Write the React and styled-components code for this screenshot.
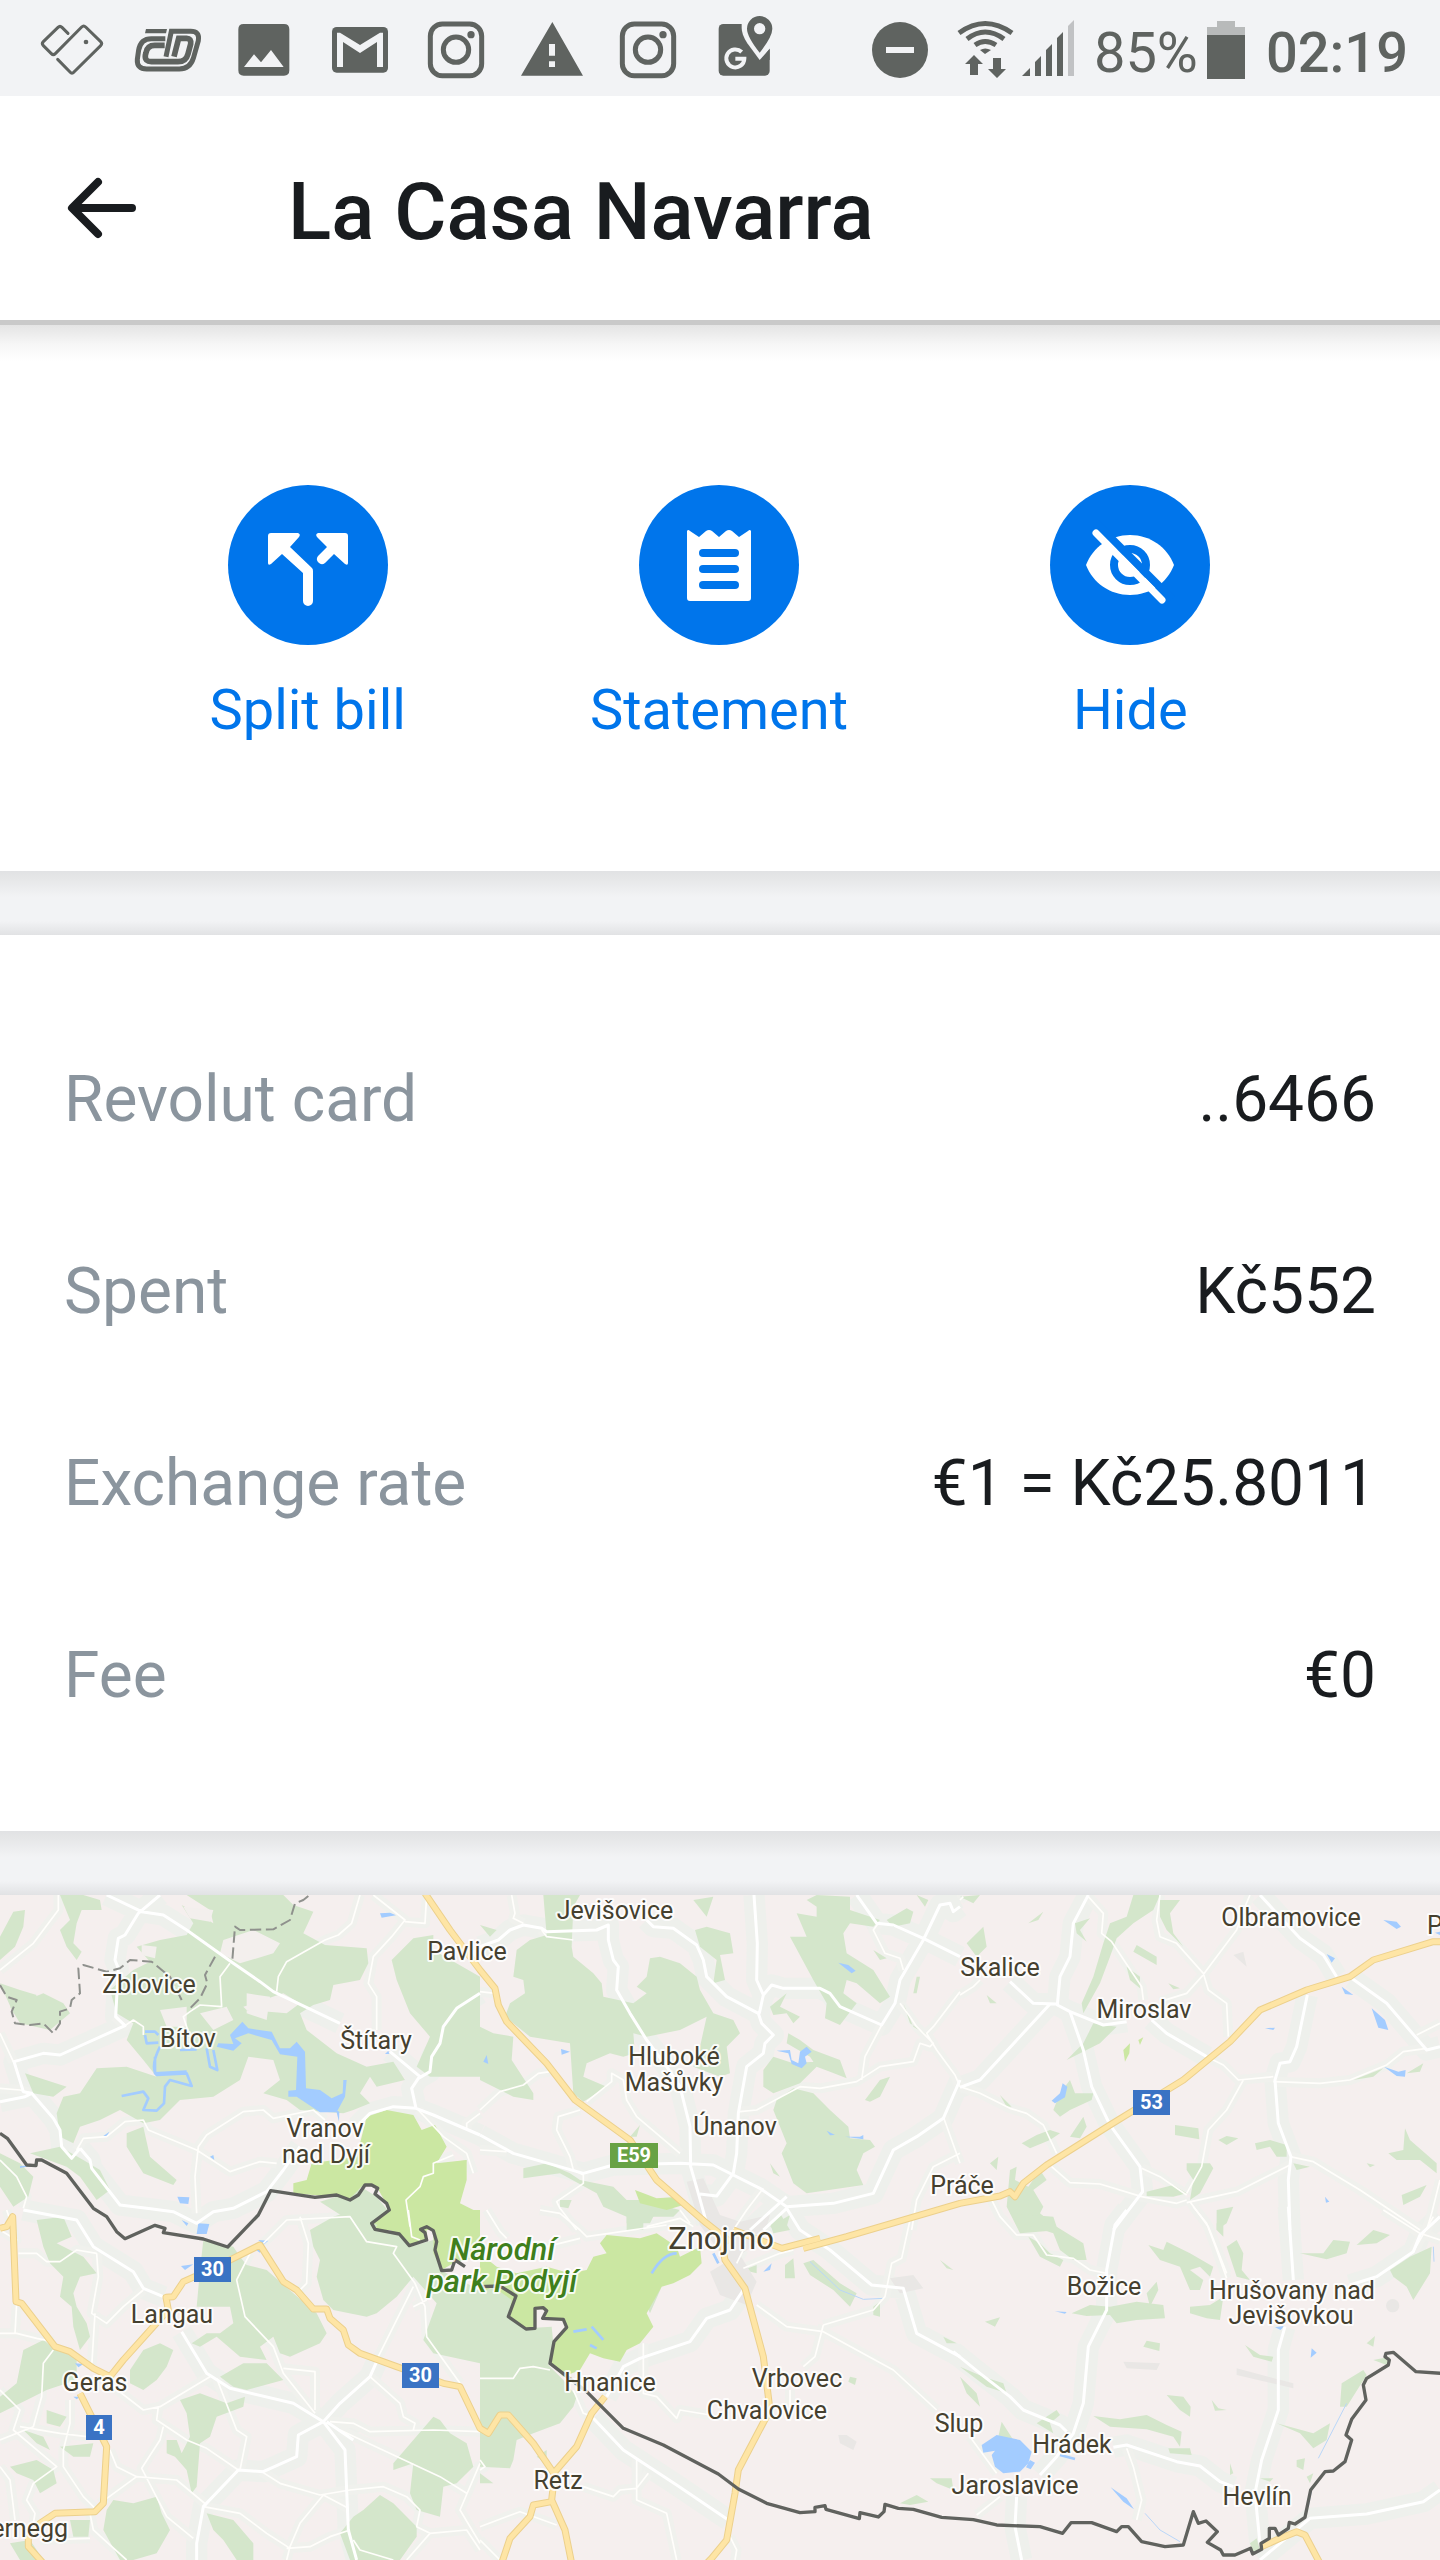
import React from "react";
import styled, { createGlobalStyle } from "styled-components";

const GlobalStyle = createGlobalStyle`
  * {
    box-sizing: border-box;
  }
  body {
    margin: 0;
    background-color: #f2f3f5;
    font-family: Roboto, "Noto Sans", sans-serif;
    color: #191c1f;
  }
`;

const Page = styled.div`
  width: 100%;
  overflow: hidden;
`;

const StatusBar = styled.div`
  display: flex;
  justify-content: space-between;
  height: 96px;
  padding: 0 32px 0 24px;
  background-color: #f2f3f5;
  color: #5f6360;
  font-size: 56px;
  line-height: 106px;
`;

const StatusGroup = styled.div`
  display: flex;
  align-items: flex-start;
`;

const StatusIcon = styled.svg`
  display: block;
  flex: none;
  width: ${(props) => props.$width || 96}px;
  height: 96px;
  fill: #5f6360;
`;

const Battery = styled.span`
  width: 102px;
`;

const Clock = styled.span`
  font-weight: 500;
  margin-left: 20px;
`;

const Header = styled.header`
  display: flex;
  align-items: center;
  height: 229px;
  padding: 0 64px;
  background-color: #fff;
  border-bottom: 5px solid #c9c9c9;
`;

const BackButton = styled.button`
  display: flex;
  padding: 0;
  margin-right: 144px;
  border: none;
  background: none;
`;

const Title = styled.h1`
  margin: 0;
  padding-top: 8px;
  font-size: 80px;
  font-weight: 500;
`;

const Actions = styled.section`
  display: flex;
  padding: 160px 104px 128px 102px;
  background: linear-gradient(#e4e4e4, #f7f7f7 20px, #fff 36px);
`;

const Action = styled.button`
  flex: 1;
  display: flex;
  flex-direction: column;
  align-items: center;
  gap: 32px;
  padding: 0;
  border: none;
  background: none;
  color: #0075eb;
  font-family: inherit;
  font-size: 56px;
  line-height: 66px;
`;

const Circle = styled.svg`
  width: 160px;
  height: 160px;
  border-radius: 50%;
  background-color: #0075eb;
  fill: #fff;
`;

const Gap = styled.div`
  height: 64px;
  background: linear-gradient(
    #e1e2e4,
    #e6e7e8 8px,
    #f2f3f5 26px,
    #f2f3f5 50px,
    #e1e2e4
  );
`;

const Details = styled.dl`
  margin: 0;
  padding: 68px 64px 60px;
  background-color: #fff;
`;

const Row = styled.div`
  display: flex;
  align-items: center;
  justify-content: space-between;
  height: 192px;
  font-size: 64px;
`;

const Label = styled.dt`
  color: #8b959e;
`;

const Value = styled.dd`
  margin: 0;
`;

const MapView = styled.svg`
  display: block;
  width: 100%;
  height: auto;
  background-color: #f5efee;
`;

const Place = styled.text`
  font-size: ${(props) => props.$size || 25}px;
  font-weight: ${(props) => (props.$park ? 500 : 400)};
  fill: ${(props) => (props.$park ? "#3f7f1c" : "#45402f")};
  font-style: ${(props) => (props.$park ? "italic" : "normal")};
  text-anchor: ${(props) => props.$anchor || "middle"};
  stroke: #fff;
  stroke-width: 4px;
  stroke-opacity: 0.85;
  stroke-linejoin: round;
  paint-order: stroke;
`;

const Shield = styled.text`
  font-size: 20px;
  font-weight: 700;
  fill: #fff;
  text-anchor: middle;
`;

const Roads = styled.g`
  fill: none;
  stroke: ${(props) => props.$color};
  stroke-width: ${(props) => props.$width}px;
  stroke-linejoin: round;
`;

const rows = [
  ["Revolut card", "..6466"],
  ["Spent", "Kč552"],
  ["Exchange rate", "€1 = Kč25.8011"],
  ["Fee", "€0"],
];

// Map geometry, split in tiles. Units are a third of a map pixel.
const tiles = [
  {
    x: 0,
    y: -45,
    forest: [
      "M40 95 75 90 70 140 45 200 0 240 0 170z",
      "M180 45 250 45 300 60 305 90 245 90 230 130 220 190 245 215 230 240 200 200 180 150 210 120z",
      "M545 75 640 130 630 90 560 45 850 45 880 75 940 95 910 160 975 195 1100 205 1105 250 1080 300 1000 315 990 360 940 375 900 400 920 450 1010 520 1100 560 1180 545 1215 600 1130 620 1110 590 1080 640 1110 670 1060 690 1030 700 900 690 860 660 790 640 840 600 820 540 745 530 720 600 640 650 540 660 480 720 430 730 360 690 300 720 240 740 220 790 180 770 170 700 190 650 240 640 290 565 380 560 470 590 430 540 380 480 400 430 350 400 330 330 400 270 450 245 410 200 480 180 560 165 580 130z",
      "M1240 175 1300 165 1300 210 1440 290 1440 590 1290 590 1250 560 1290 470 1230 400 1190 300 1175 240z",
      "M30 380 130 340 190 370 210 400 150 450 60 430z",
      "M0 310 60 330 110 345 90 380 40 400z",
      "M380 760 430 740 450 830 530 900 520 915 430 880 380 800z",
      "M90 820 180 800 250 840 300 870 330 930 290 960 240 890 200 860z",
      "M0 820 60 850 100 890 85 950 40 980 0 920z",
      "M960 965 1090 925 1130 950 1170 1000 1120 1050 1030 1010z",
      "M75 580 200 620 160 650 100 640z",
      "M1340 850 1400 840 1390 880z",
    ],
    hole: [
      "M550 80 640 90 630 125 570 115z",
      "M670 180 760 150 840 190 820 220 720 250 660 220z",
      "M730 380 850 340 900 370 860 400 740 390z",
      "M600 400 680 380 700 420 640 450z",
      "M740 340 810 350 800 420 740 400z",
      "M425 195 470 200 465 235 425 225z",
      "M480 390 560 380 560 440 500 440z",
    ],
    park: [
      "M1100 710 1160 690 1240 705 1265 750 1305 735 1340 800 1310 850 1400 840 1400 900 1380 970 1440 1000 1440 1050 1120 1050 1170 990 1130 920 1090 915 1050 955 880 940 880 910 920 900 935 850 1070 830z",
    ],
    water: [
      "M690 465 727 425 745 445 815 455 840 505 870 505 890 485 915 515 918 625 960 630 995 655 1028 640 1030 600 1040 600 1035 650 1010 697 960 697 890 650 865 650 865 632 888 630 892 530 840 523 815 480 745 460 705 475 725 490 700 512 650 500 655 490 700 492z",
      "M1140 100 1170 98 1188 106 1145 113z",
      "M532 950 568 952 565 972 540 970z",
      "M595 1030 628 1032 620 1062 590 1062z",
      "M630 830 640 825 643 840z",
      "M60 858 110 855 60 864z",
      "M310 768 328 755 320 770z",
      "M1155 522 1165 512 1168 522z",
      "M1008 690 1018 695 1017 725z",
    ],
    stream: [
      "M480 500Q450 560 470 585L560 580 575 618 510 600 495 620 492 670 470 692 430 690 445 655 430 635 365 648",
      "M465 530 465 580 560 575M620 505 630 560 652 570 640 510",
      "M435 455 465 455 475 465M435 465 440 490 475 488",
      "M540 510 590 508",
    ],
    minor: [
      "M175 45 175 90 100 190 0 270",
      "M1080 45 1055 130 1015 165 975 180 860 245 835 290 830 335",
      "M1120 45 1215 120 1175 170 1120 230 1105 310 1130 350 1130 450",
      "M1280 45 1275 130 1215 125",
      "M690 250 660 290 665 380 600 375 570 395 550 410 565 455",
      "M0 625 60 630 90 640",
      "M230 810 250 775 320 770 375 725 430 720 445 750 590 810 690 875 780 845 830 850",
      "M590 1000 585 890 595 800 620 765 730 695 790 690 820 715 940 690 975 720",
      "M1255 690 1330 770 1400 820 1420 880M1360 825 1300 850 1300 880 1270 890 1260 920 1218 960 1230 1040",
      "M0 460 40 545M0 840 50 890 80 950 70 985",
      "M1440 700 1400 730 1400 750",
      "M345 410 375 437 400 420 430 440 430 465",
    ],
    major: [
      "M320 45 425 95 490 105 560 150 700 250 780 305 820 335 1020 430",
      "M480 45 415 100 375 165 355 175 345 240 355 265 347 410 375 437 180 525 130 520 42 545 70 635 95 640 160 715 180 750 185 800 215 835 240 805",
      "M0 665 75 650 95 640",
      "M1440 340 1370 385 1330 440 1320 490 1295 530 1290 575 1255 595 1235 625 1248 685 1180 680 1110 700 1070 740",
      "M1170 515 1260 590",
      "M1248 685 1300 705 1440 765",
      "M240 805 270 840 275 865 360 975 440 985 520 995 590 1030 640 995 700 985 800 935 850 870 900 800",
    ],
    highway: [
      "M1275 40 1350 150 1440 270 1485 325 1495 375 1520 425 1640 550 1725 660 1890 780 1970 900 2120 1030 2190 1085",
    ],
    border:
      "M0 760 22 775 80 855 108 857 110 840 125 840 200 880 280 985 320 1010 350 1055 375 1076 465 1036 495 1045 490 1058 610 1077 683 1101 775 1005 812 932 945 952 1010 945 1050 960 1075 945 1095 915 1115 915 1133 925 1125 942 1160 970 1168 990 1115 1030 1125 1048 1198 1062 1228 1097 1280 1080 1275 1058 1262 1048 1280 1040 1300 1052 1310 1085 1305 1110 1325 1172 1355 1170 1365 1140 1395 1160",
    dashed:
      "M925 48 910 60 885 70 870 120 820 148 720 150 705 140 697 240M645 230 615 285 622 310 600 355 570 385M545 360 510 290 455 245 390 240 360 265 320 275 250 255 235 265 240 340 215 360 210 385 180 395 180 430 160 460 130 430 90 435 45 430 35 395 50 360 20 350 0 315",
  },
  {
    x: 1440,
    y: -45,
    forest: [
      "M190 45 300 45 280 80 275 200 280 230 340 280 365 310 370 350 460 370 500 340 470 320 500 290 510 235 540 230 600 250 650 290 660 330 700 400 760 420 780 460 740 500 750 580 720 590 640 560 660 500 680 410 600 450 500 470 460 460 465 520 430 530 390 520 320 550 310 590 380 620 310 665 280 640 270 490 150 470 75 410 90 370 135 340 130 300 100 290 110 210 150 180 200 165z",
      "M0 440 40 460 100 470 95 540 160 640 160 660 100 650 0 600z",
      "M645 150 680 140 750 160 760 220 720 225 735 300 700 310 710 240 660 200z",
      "M1010 45 1110 50 1110 90 1200 120 1180 140 1110 130 1090 160 1100 220 1180 270 1230 350 1200 370 1130 310 1100 300 1090 340 1130 370 1080 435 1035 415 1040 370 1000 300 930 170 980 170 950 100 1010 110z",
      "M980 60 1010 45 1010 80z",
      "M850 570 880 530 940 550 1000 545 1010 560 960 610 880 640 850 620z",
      "M940 625 1000 640 1050 690 1105 740 1110 775 1170 780 1185 800 1150 820 1130 870 1150 915 980 940 940 910 905 820 920 790 880 690 890 660z",
      "M925 460 960 480 1000 510 1080 540 1100 595 1050 575 1010 560 990 530 920 490z",
      "M130 865 200 850 270 880 300 900 400 920 440 960 480 960 560 980 600 990 580 1010 490 1010 490 1050 440 1050 440 1010 370 980 350 940 240 880 130 895z",
      "M870 380 920 340 900 380 960 410 940 430 920 400 880 405z",
      "M1220 120 1280 85 1300 95 1290 130 1240 140z",
      "M1155 660 1200 600 1230 590 1200 650 1170 665z",
      "M1180 210 1220 235 1200 240z",
      "M1270 370 1300 440 1350 470 1290 430z",
      "M1310 290 1320 290 1310 340 1300 340z",
      "M640 60 700 50 680 110z",
      "M0 135 50 150 30 170z",
      "M870 850 900 890 880 880z",
      "M240 960 275 960 265 985 240 980z",
      "M450 770 480 735 470 770z",
      "M870 1030 900 1000 930 1050 880 1060z",
      "M1310 45 1345 60 1335 80z",
    ],
    park: ["M465 930 530 955 600 950 610 975 560 990 480 970z"],
    water: [
      "M890 512 930 510 935 540 955 550 960 515 980 500 995 515 975 530 980 550 965 565 935 552 925 520z",
      "M1075 248 1105 255 1127 272 1115 280z",
      "M243 507 270 515 245 524z",
      "M1040 752 1065 765 1050 766z",
      "M1095 770 1140 770 1150 765 1150 778z",
      "M10 545 20 525 25 552z",
    ],
    stream: [],
    minor: [
      "M95 45 105 100 100 115 130 130M185 150 200 170 280 180",
      "M0 335 45 340",
      "M0 690 60 635 130 615 175 580 210 575",
      "M320 665 395 605 395 580 430 600 440 660 470 710 600 820",
      "M300 690 235 710 230 750 270 830 280 870 310 885 310 910 230 965 240 985 290 1050",
      "M780 695 830 690 960 620 1020 625 1130 605 1200 560 1300 545 1320 490 1350 500 1360 490 1310 440 1290 410 1260 370",
      "M1195 130 1180 150 1215 220 1260 235 1270 270",
      "M1145 600 1155 530 1205 435M1440 335 1360 440 1340 460 1370 510 1425 585 1440 620",
      "M850 925 800 990 760 1050M1440 820 1360 860 1310 960 1295 1050",
      "M1390 710 1440 850",
      "M0 810 80 815M600 990 630 1030",
      "M500 1040 600 1015 640 1040",
    ],
    major: [
      "M0 200 55 180 90 150 130 135 185 145 200 155 350 150 385 135 385 180 400 240 415 260 410 330 450 400 500 480 560 560 600 620 630 740 632 860 655 940 680 1030",
      "M500 120 520 140 580 145 650 195 670 240 680 290 740 350 835 400 845 430 880 465 855 490 850 520 800 560 775 700 770 820 760 880 710 948 660 942",
      "M822 45 832 190 830 300 850 345 838 400",
      "M850 345 875 315 910 325 1020 325 1050 340 1080 380 1205 435 1245 370 1260 300 1330 180 1380 75 1410 70 1420 95 1440 80",
      "M1130 45 1190 130 1240 135 1330 175 1440 230",
      "M0 765 100 820 310 880 400 855 600 850 700 855 840 925 920 980 1060 970 1180 940 1240 810 1310 770 1390 715 1440 600",
      "M850 1050 920 985 960 1050 1050 1110 1175 1215 1270 1225 1310 1360 1440 1430",
    ],
    highway: [
      "M970 1105 1100 1070 1440 970 1560 948 1590 935 1605 950 1630 910 1700 855 1890 735 2110 600 2250 485 2340 390 2480 330 2610 290 2680 240 2860 185 2890 185",
    ],
  },
  {
    x: 2880,
    y: -45,
    forest: [
      "M520 45 600 45 580 90 520 130 470 175 450 230 420 310 370 400 365 370 400 290 430 190 450 130 500 110z",
      "M600 60 660 60 630 100 640 160 670 200 620 150 600 110z",
      "M20 190 70 140 80 200 50 230z",
      "M205 130 250 95 235 120z",
      "M530 195 590 230 590 255 520 215z",
      "M345 130 390 115 360 150 380 185 350 160z",
      "M500 260 540 290 540 325 510 300z",
      "M0 50 60 45 40 70z",
      "M400 430 470 440 420 490 320 540 370 490z",
      "M280 690 300 640 330 600 345 640 400 640 395 660 330 690 300 710z",
      "M185 790 230 765 270 750 300 760 270 780 210 805z",
      "M330 770 370 710 380 740 360 775z",
      "M645 735 715 745 718 778 645 765z",
      "M775 780 800 768 835 775 800 795z",
      "M885 790 930 780 980 795 980 830 950 830 930 800 890 810z",
      "M680 850 750 850 760 865 720 940 690 960 700 900 680 870z",
      "M560 935 640 915 680 940 640 950 560 948z",
      "M150 870 170 860 165 900 205 920 240 870 260 900 220 930 250 980 240 1000 300 1050 180 1060 140 980z",
      "M90 850 115 830 110 870z",
      "M1285 820 1330 810 1335 745 1350 780 1430 850 1430 880 1380 840 1310 840z",
      "M1325 945 1400 915 1380 950 1330 975z",
      "M1180 600 1270 565 1240 590z",
      "M1340 580 1390 550 1380 575z",
      "M1000 850 1050 860 1010 870z",
      "M1220 850 1245 855 1230 862z",
      "M770 990 820 980 800 1030 770 1050z",
      "M120 645 155 680 140 680z",
      "M80 345 110 370 90 370z",
      "M625 310 660 325 640 328z",
    ],
    park: ["M490 510 510 490 508 520 495 545z", "M535 480 550 472 540 495z"],
    water: [
      "M275 662 300 640 308 610 322 620 315 652 285 670z",
      "M1270 120 1310 125 1323 140 1310 147z",
      "M1100 222 1125 235 1115 248z",
      "M1145 320 1180 345 1155 342z",
      "M1235 385 1275 420 1285 450 1255 443z",
      "M1272 560 1315 575 1337 570 1335 590 1310 588z",
      "M915 445 945 443 940 450z",
      "M1095 950 1108 965 1098 968z",
      "M1425 158 1440 155 1440 165z",
    ],
    stream: [],
    minor: [
      "M385 50 430 100 425 160 455 185 545 320 550 360",
      "M600 45 590 120 600 170 650 190 730 280 745 330 800 370 805 470",
      "M870 45 855 80 830 150 725 290 680 340 600 365",
      "M740 530 790 555 835 600 940 590M850 600 800 690 745 750 725 860 680 940",
      "M0 620 60 640 150 685 200 700 250 735 290 820M275 860 330 908 420 912 545 950 650 970 680 960",
      "M545 865 600 890 680 945M680 968 830 935 990 855M690 965 745 1040 800 1180",
      "M990 830 1060 845 1200 930 1380 1050",
      "M940 605 1080 610 1170 600 1280 555 1330 515 1400 505",
      "M95 960 120 1010 170 1065 220 1065 260 1125 340 1135 390 1170 440 1180",
      "M1440 430 1370 465M1440 900 1415 1000 1400 1050",
      "M0 345 40 320 60 300",
      "M0 60 10 50",
    ],
    major: [
      "M385 45 340 130 330 230 300 290 292 375 330 395 430 435 500 425M150 305 220 370 290 372",
      "M270 372 60 600 0 622M330 395 370 510 395 620 450 735 540 860 548 935 460 1050",
      "M575 420 620 460 740 530",
      "M900 45 1020 175 1090 225 1130 290M1175 295 1280 370 1400 510 1440 500",
      "M1042 345 1010 500 990 545 960 550 945 600 955 730 993 830 985 900 990 1050",
    ],
    highway: [],
  },
  {
    x: 0,
    y: 945,
    forest: [
      "M110 30 190 20 215 80 170 100 250 140 290 190 240 200 220 250 230 290 260 340 270 380 240 420 220 350 215 290 180 260 190 200 150 160 130 110z",
      "M930 60 1000 20 1060 0 1120 50 1220 80 1230 110 1300 90 1320 180 1440 240 1440 460 1300 430 1270 390 1310 280 1240 200 1190 260 1130 310 1100 320 1000 300 970 270 950 200 960 150 940 110z",
      "M610 90 700 110 720 140 740 165 800 180 880 250 950 310 980 370 960 400 870 440 840 430 820 380 780 410 800 450 720 440 650 380 600 410 575 400 620 370 660 370 700 340 690 290 590 290 600 180z",
      "M730 460 800 460 850 510 740 540 700 530 660 500z",
      "M70 420 130 390 170 420 230 440 230 510 140 540 100 560 0 610 0 560 50 520z",
      "M390 480 430 420 480 400 520 420 500 470 470 510 430 540 390 520z",
      "M540 570 600 550 680 580 735 560 730 590 650 620 630 680 600 700 590 830 575 850 560 780 525 740 500 730 500 690 530 690 545 730 570 680 560 610z",
      "M320 900 340 870 400 880 470 860 485 910 510 960 470 1030 400 1050 360 1050 310 960z",
      "M1240 690 1300 620 1320 630 1350 670 1400 700 1420 770 1370 820 1330 830 1320 920 1250 900 1230 850 1240 760 1180 780 1180 760z",
      "M1060 920 1090 900 1140 855 1180 880 1250 950 1250 980 1200 1050 1050 1050 1020 970z",
      "M140 600 200 620 180 650 140 640z",
      "M30 770 110 750 160 780 170 820 120 850 100 810 50 790z",
      "M180 710 280 700 270 740 220 740z",
      "M620 910 700 930 760 1000 760 1050 710 1050 670 990 640 960z",
      "M210 930 270 930 265 980 220 980z",
      "M30 1000 90 990 130 1050 60 1050z",
      "M70 660 130 680 150 720 110 700z",
    ],
    park: [
      "M1170 0 1440 0 1440 140 1360 160 1325 180 1300 130 1300 60 1280 50 1280 90 1228 105 1198 72 1120 40z",
    ],
    water: [
      "M543 168 580 163 555 180z",
      "M775 90 805 92 790 105z",
      "M225 460 250 462 235 472z",
      "M220 560 240 560 230 568z",
      "M765 118 785 118 780 128z",
      "M545 30 565 40 560 48z",
    ],
    stream: [],
    minor: [
      "M55 130 110 130 140 155 180 155 230 120 290 130",
      "M290 130 295 200 275 310 320 340 370 290 430 240M285 310 275 470",
      "M0 370 50 370 110 385 160 395M45 370 50 280M160 420 130 460 125 560 100 650 0 690",
      "M300 500 430 600 480 590 630 500M475 590 470 630 560 690 620 715 715 780",
      "M490 650 480 690 425 775 500 920 580 985M720 780 740 680 710 660 650 505",
      "M750 130 710 210 735 320 820 410 850 490 945 610M850 475 945 485 945 600",
      "M1225 0 1235 80 1260 90M790 100 860 30 1050 20 1100 95 1190 110 1180 130 1245 220 1275 290 1280 380 1380 520",
      "M1240 230 1130 450M1240 290 1280 270",
      "M1110 500 1200 580 1210 620 1245 640 1240 660M990 635 1060 640 1110 665 1300 660 1440 665",
      "M785 785 840 820 960 855 1050 840 1150 830 1220 860 1260 900 1250 950 1290 970",
      "M970 855 900 940 870 1010 860 1050M860 1015 930 1010 990 980 1050 960M970 855 1045 895",
      "M610 890 720 910 800 970 870 1015",
      "M0 540 60 600 40 660 170 770 100 820 80 870 105 910 100 940",
      "M60 650 180 670 260 680M210 570 210 640 190 720 190 770 250 860 290 900",
      "M330 720 350 770 410 800 300 880M410 800 530 810 620 885",
      "M0 770 30 810 45 930M270 910 280 960 380 1050M120 990 270 985",
      "M1020 660 1320 800 1400 850M1290 970 1220 1050M1290 970 1400 960 1440 1020M1440 760 1380 900 1440 1000",
      "M900 20 925 100 920 220 900 240",
      "M1060 990 1080 1020 1180 1050",
      "M0 60 50 90 20 0",
    ],
    major: [
      "M70 0 230 30 280 110 400 185 430 235 490 260",
      "M545 365 620 490 690 535 880 580 970 635 1020 580 1110 500 1130 455",
      "M970 635 895 675 890 740 790 785 715 780 610 890 590 1000 590 1050",
      "M970 635 1035 720 1045 960 1070 1050M980 635 1060 690",
    ],
    highway: [
      "M0 55 20 50 38 20 48 275 65 280 165 410 210 425 280 475 330 500 370 450 460 350 505 300 498 262 520 260 550 215 640 175 780 105 850 215 890 240 940 297 980 297 990 325 1030 360 1045 405 1080 430 1190 470 1330 520 1380 530 1440 655 1465 670 1500 615 1525 615 1600 700 1665 795",
      "M240 550 320 710 310 880 285 905 165 910 120 940 85 985 85 1010 130 1060",
    ],
  },
  {
    x: 1440,
    y: 945,
    forest: [
      "M0 240 60 230 100 260 90 320 140 355 215 350 220 400 205 465 250 510 290 560 280 590 240 640 160 670 110 690 100 750 90 775 0 770z",
      "M500 285 530 250 545 230 510 310z",
      "M870 50 930 15 920 50 890 60z",
      "M915 165 940 145 945 205 915 205z",
      "M970 160 1000 150 1080 220 1130 250 1110 290 1060 240 990 195z",
      "M1180 290 1200 275 1200 320 1180 315z",
      "M1110 500 1130 505 1125 525 1105 515z",
      "M1350 805 1415 805 1420 840 1370 820z",
      "M1260 880 1310 855 1345 875 1290 885z",
      "M0 790 40 820 0 820z",
      "M170 740 200 720 200 760z",
      "M1390 380 1430 400 1400 400z",
      "M790 180 830 165 830 190z",
      "M440 0 530 0 510 40 440 40z",
      "M1380 150 1420 180 1400 175z",
    ],
    park: [
      "M0 130 50 170 110 190 200 170 270 190 320 180 340 140 380 130 360 100 380 75 480 85 530 70 590 110 600 140 660 110 665 160 630 195 580 220 545 230 500 310 520 350 480 400 440 420 420 455 370 445 330 430 300 480 250 500 210 460 220 400 260 350 255 330 195 330 200 300 165 295 165 355 140 360 85 320 95 270 40 230 0 250z",
    ],
    water: ["M850 185 875 160 870 180z"],
    stream: [
      "M515 190Q550 130 590 130",
      "M700 130 715 160",
      "M730 200 738 225",
      "M280 365 320 358M335 350 370 390M330 405 350 415",
    ],
    brook: ["M990 155 1080 240 1150 268 1210 265"],
    minor: [
      "M20 0 60 65 80 85M180 0 240 10 300 60 320 80 560 45M300 85 200 110",
      "M790 175 900 130 940 120M770 160 790 120",
      "M830 285 920 350 1030 365 1240 480 1370 600",
      "M1030 345 1180 300 1215 260 1235 160 1265 145 1290 30M1030 345 1005 440 970 470",
      "M490 400 490 550 530 560 590 625 600 600 690 615M280 540 310 610 340 620",
      "M0 505 100 505 120 475 160 470 210 480",
      "M310 830 400 860 420 840 470 835 505 790M470 750 470 870 560 910 575 980 590 1050",
      "M0 950 120 905 230 945M750 980 770 1020 765 1050",
      "M0 780 15 770 0 750M0 990 60 1050",
      "M930 540 930 590",
    ],
    major: [
      "M790 240 750 300 680 325 630 395 480 445 430 470 380 560",
      "M340 625 430 720 590 825 745 930",
      "M810 60 920 -40",
    ],
    highway: [
      "M720 70 735 150 795 235 850 440 870 600 775 780 765 850 740 990 695 1045 670 1070",
      "M375 560 335 610 290 710 225 785 215 870 255 960 275 1060M215 875 160 885 150 920 90 985 65 1060",
      "M760 60 905 115 1020 85",
    ],
    border:
      "M0 230 60 228 108 258 85 320 138 357 165 355 165 295 190 293 200 302 188 325 250 328 260 352 222 395 210 460 320 545 430 655 550 705 715 792 775 837 860 880 960 908 1005 905 1005 892 1035 887 1038 898 1138 926 1140 908 1195 921 1212 905 1215 883 1255 895 1300 898 1385 922 1480 929 1550 945 1680 950 1748 970 1773 938 1835 938 1910 965 1925 950 1945 950 1985 995 2055 1010 2110 1005 2140 905 2155 940 2178 933 2212 965 2182 997 2222 1020 2230 1035 2265 1035 2312 1015 2318 1032 2345 1018 2343 1000 2368 985 2368 955 2385 955 2395 975 2425 955 2428 937 2445 942 2475 922 2492 840 2535 785 2560 783 2595 755 2615 690 2598 675 2615 628 2658 570 2650 525 2660 505 2725 465 2728 450 2715 440 2718 430 2740 427 2808 485 2885 490",
  },
  {
    x: 2880,
    y: 945,
    forest: [
      "M150 10 280 20 290 50 370 100 380 150 340 150 300 120 280 70 220 50 180 40z",
      "M205 80 240 100 270 130 310 150 300 170 240 140z",
      "M565 105 610 120 620 95 690 130 760 170 750 200 720 170 690 180 730 210 720 240 690 240 660 170 600 150z",
      "M800 110 830 90 850 130 845 180 870 210 830 200z",
      "M335 310 390 285 450 290 530 275 610 285 615 325 530 330 470 340 450 315 380 318z",
      "M550 410 560 392 600 400 598 423z",
      "M690 290 750 285 790 260 780 330 740 325 690 310z",
      "M400 618 480 628 560 615 620 645 665 665 660 710 640 680 560 658 450 650z",
      "M625 715 690 715 695 735 630 730z",
      "M620 555 670 560 692 590 690 620 660 600z",
      "M755 570 775 595 800 600 765 602z",
      "M855 405 900 435 940 440 935 455 880 440z",
      "M1145 520 1210 480 1220 495 1160 590 1140 590z",
      "M1290 180 1350 140 1415 110 1410 190 1360 270 1340 230 1300 200z",
      "M1020 130 1090 130 1120 90 1170 95 1160 130 1100 148z",
      "M1190 105 1240 60 1290 75 1250 100z",
      "M950 640 1060 670 1110 640 1100 690 1060 715 1020 670z",
      "M115 680 125 635 160 690z",
      "M230 640 290 600 300 615 270 640 280 670z",
      "M870 1000 890 985 900 1020 880 1030z",
      "M1010 750 1035 745 1030 780 1010 770z",
      "M1040 800 1060 790 1050 820z",
      "M900 805 940 805 930 815z",
      "M75 335 120 322 105 350z",
      "M1220 400 1245 378 1240 410z",
      "M1240 450 1290 440 1280 465z",
      "M810 760 820 790 810 795z",
      "M560 250 590 215 595 240 570 290z",
      "M0 470 70 500 130 520 140 550 80 530z",
      "M0 500 50 550 60 590 20 550z",
      "M770 40 790 40 790 80 770 60z",
    ],
    park: [],
    water: [
      "M65 705 110 675 180 690 215 725 205 760 180 785 130 790 105 770 95 735 105 722 70 728z",
      "M210 750 225 758 212 778 198 772z",
      "M1055 415 1070 428 1052 443z",
      "M285 304 320 306 315 311z",
      "M945 352 972 348 962 360z",
      "M452 832 500 865 522 898 490 875z",
    ],
    stream: ["M300 735 345 747"],
    brook: ["M555 910 600 960 660 995", "M1160 580 1075 745", "M1045 890 1055 840", "M1420 110 1422 155"],
    minor: [
      "M700 -10 740 40 770 120 800 205",
      "M500 715 520 770 545 870 530 930",
      "M30 680 110 790M120 860 50 915",
      "M1270 0 1380 70 1440 90M1420 20 1360 125",
    ],
    major: [
      "M500 0 465 45 440 180 440 300 385 410 370 580 340 670 290 740 240 795",
      "M-20 425 60 490 150 560 190 600 300 645 320 665",
      "M460 712 500 705 650 755 720 768 780 815 820 830",
      "M985 -10 1000 210M975 350 955 420 955 600 905 750 885 850 900 1000",
      "M1440 20 1380 75 1360 125 1250 200 1170 225",
      "M170 860 165 950 185 1050",
      "M900 1050 1050 925 1220 912 1390 875 1440 840",
    ],
    highway: ["M905 1010 960 985 1010 965 1035 975 1080 1060"],
  },
];

const places = [
  { name: "Zblovice", x: 149, y: 98 },
  { name: "Bítov", x: 188, y: 152 },
  { name: "Štítary", x: 376, y: 154 },
  { name: "Pavlice", x: 467, y: 65 },
  { name: "Vranov", x: 325, y: 242 },
  { name: "nad Dyjí", x: 326, y: 268 },
  { name: "Jevišovice", x: 615, y: 24 },
  { name: "Hluboké", x: 674, y: 170 },
  { name: "Mašůvky", x: 674, y: 196 },
  { name: "Únanov", x: 735, y: 240 },
  { name: "Práče", x: 962, y: 299 },
  { name: "Skalice", x: 1000, y: 81 },
  { name: "Miroslav", x: 1144, y: 123 },
  { name: "Olbramovice", x: 1291, y: 31 },
  { name: "P", x: 1427, y: 39, anchor: "start" },
  { name: "Langau", x: 172, y: 428 },
  { name: "Geras", x: 95, y: 496 },
  { name: "ernegg", x: 68, y: 642, anchor: "end" },
  { name: "Národní", x: 502, y: 365, size: 31, park: true },
  { name: "park Podyjí", x: 502, y: 397, size: 31, park: true },
  { name: "Znojmo", x: 721, y: 354, size: 31 },
  { name: "Hnanice", x: 610, y: 496 },
  { name: "Vrbovec", x: 797, y: 492 },
  { name: "Chvalovice", x: 767, y: 524 },
  { name: "Slup", x: 959, y: 537 },
  { name: "Retz", x: 558, y: 594 },
  { name: "Jaroslavice", x: 1015, y: 599 },
  { name: "Hrádek", x: 1072, y: 558 },
  { name: "Božice", x: 1104, y: 400 },
  { name: "Hrušovany nad", x: 1292, y: 404 },
  { name: "Jevišovkou", x: 1291, y: 429 },
  { name: "Hevlín", x: 1257, y: 610 },
];

const shields = [
  { name: "E59", x: 610, y: 248, w: 48, color: "#68a244" },
  { name: "53", x: 1133, y: 195, w: 37, color: "#3a73c4" },
  { name: "30", x: 194, y: 362, w: 37, color: "#3a73c4" },
  { name: "30", x: 402, y: 468, w: 37, color: "#3a73c4" },
  { name: "4", x: 86, y: 520, w: 26, color: "#3a73c4" },
];

function Layer({ name, ...rest }) {
  return tiles.map((tile) =>
    tile[name] ? (
      <path
        key={`${tile.x}-${tile.y}`}
        transform={`translate(${tile.x} ${tile.y})`}
        d={[].concat(tile[name]).join("")}
        {...rest}
      />
    ) : null
  );
}

function RegionMap() {
  return (
    <MapView viewBox="0 0 1440 665" role="img" aria-label="Map of Znojmo">
      <g transform="scale(0.33333)">
        <Roads $color="#eef0ec" $width={64}>
          <Layer name="major" />
        </Roads>
        <Roads $color="#f0f1ed" $width={30}>
          <Layer name="minor" />
        </Roads>
        <Layer name="forest" fill="#d4e6cb" />
        <Layer name="hole" fill="#f3efed" />
        <Layer name="park" fill="#cbe7a2" />
        <Layer name="water" fill="#a3ccff" />
        <Roads $color="#a3ccff" $width={8}>
          <Layer name="stream" />
        </Roads>
        <Roads $color="#b9d6f8" $width={3}>
          <Layer name="brook" />
        </Roads>
        <path
          d="M2060 860 2110 850 2160 960 2220 980 2310 960 2290 1030 2220 1080 2270 1160 2240 1230 2160 1200 2130 1130 2180 1100 2100 990z"
          fill="#e9e7e5"
        />
        <path d="M3370 1400 3480 1405 3470 1425 3380 1420zM3710 1420 3880 1465 3880 1480 3710 1440z" fill="#e9e7e5" />
        <path d="M2515 1620 2540 1620 2570 1640 2560 1665 2520 1645zM2670 1150 2740 1140 2770 1180 2700 1195zM3700 180 3740 215 3730 170z" fill="#e9e7e5" />
        <circle cx="4178" cy="1232" r="20" fill="#e9e7e5" />
        <Roads $color="#fffefb" $width={5}>
          <Layer name="minor" />
        </Roads>
        <Roads $color="#ffffff" $width={9}>
          <Layer name="major" />
        </Roads>
        <Roads $color="#ecd08c" $width={21}>
          <Layer name="highway" />
        </Roads>
        <Roads $color="#fee5a5" $width={15}>
          <Layer name="highway" />
        </Roads>
        <Roads $color="#8f918d" $width={6}>
          <Layer name="dashed" strokeDasharray="34 14" />
        </Roads>
        <Roads $color="#60625e" $width={10}>
          <Layer name="border" />
        </Roads>
      </g>
      {shields.map((s) => (
        <g key={`${s.name}-${s.x}`}>
          <rect x={s.x} y={s.y} width={s.w} height="25" fill={s.color} />
          <Shield x={s.x + s.w / 2} y={s.y + 19}>
            {s.name}
          </Shield>
        </g>
      ))}
      {places.map((p) => (
        <Place key={p.name} x={p.x} y={p.y} $size={p.size} $park={p.park} $anchor={p.anchor}>
          {p.name}
        </Place>
      ))}
    </MapView>
  );
}

function InstagramIcon() {
  return (
    <StatusIcon viewBox="0 0 288 288">
      <g fill="none" stroke="#5f6360" strokeWidth="15">
        <rect x="67" y="72" width="154" height="155" rx="36" />
        <circle cx="144" cy="149" r="38" />
      </g>
      <circle cx="189" cy="104" r="11" />
    </StatusIcon>
  );
}

function Notifications() {
  return (
    <StatusGroup>
      <StatusIcon viewBox="0 0 288 288">
        <path
          d="M101 178 138 216Q144 223 150 216L230 137Q236 131 230 125L185 81Q179 75 173 81L94 161Q88 167 82 161L58 137Q52 131 58 125L102 82Q108 76 114 82L132 100"
          fill="none"
          stroke="#5f6360"
          strokeWidth="9"
          strokeLinecap="round"
        />
        <circle cx="186" cy="126" r="7" />
      </StatusIcon>
      <StatusIcon viewBox="0 0 288 288">
        <path d="M78 87H141L138 100H75z" />
        <g fill="none" stroke="#5f6360">
          <path
            d="M136 116H94Q62 116 56 150L52 178Q50 207 80 207H178Q210 207 220 175L235 122Q240 94 212 94H154L138 170"
            strokeWidth="15"
          />
          <path
            d="M134 136H104Q82 136 78 158L76 166Q74 185 94 185H174Q198 185 204 162L212 132Q214 115 200 115H176L162 170"
            strokeWidth="17"
          />
        </g>
      </StatusIcon>
      <StatusIcon viewBox="0 0 288 288">
        <path
          fillRule="evenodd"
          d="M83 72H204Q220 72 220 88V211Q220 227 204 227H83Q67 227 67 211V88Q67 72 83 72zM84 201H203L165 150 135 187 114 163z"
        />
      </StatusIcon>
      <StatusIcon viewBox="0 0 288 288">
        <rect x="60" y="81" width="168" height="137" rx="14" />
        <path fill="#f2f3f5" d="M75 98H84L144 135 204 98H213V201H195V126L144 159 93 126V201H75z" />
      </StatusIcon>
      <InstagramIcon />
      <StatusIcon viewBox="0 0 288 288">
        <path fillRule="evenodd" d="M145 66 237 227H51zM135 132V167H153V132zM135 184V201H153V184z" />
      </StatusIcon>
      <InstagramIcon />
      <StatusIcon viewBox="0 0 288 288">
        <rect x="68" y="72" width="153" height="155" rx="14" />
        <path fill="#f2f3f5" d="M191 180 154 130Q137 104 137 84V60H236V130z" />
        <path
          fillRule="evenodd"
          d="M191 48A38 38 0 0 1 229 86Q229 110 191 158 153 110 153 86A38 38 0 0 1 191 48zM191 69A17 17 0 1 0 191 103 17 17 0 1 0 191 69z"
        />
        <path d="M221 146V180H195z" />
        <path
          d="M137 156A27 27 0 1 0 145 176H118"
          fill="none"
          stroke="#f2f3f5"
          strokeWidth="12"
        />
      </StatusIcon>
    </StatusGroup>
  );
}

function SystemStatus() {
  return (
    <StatusGroup>
      <StatusIcon $width={228} viewBox="866 0 228 96">
        <circle cx="900" cy="50" r="28" />
        <path fill="#f2f3f5" d="M886 47H914V53H886z" />
        <g fill="none" stroke="#5f6360" strokeWidth="5">
          <path d="M959 33Q985 14 1012 33" />
          <path d="M967 39Q985 25 1004 39" />
          <path d="M975 45Q985 38 996 45" />
        </g>
        <path d="M980 50Q985 47 991 50L985 54z" />
        <path d="M974 55 983 64H978V75H970V64H965zM997 78 988 69H993V58H1001V69H1006z" />
        <path d="M1022 76 1030 68V76zM1035 76V62L1041 56V76zM1046 76V50L1052 44V76zM1057 76V38L1063 32V76z" />
        <path fill="#c1c2c4" d="M1068 76V26L1074 20V76z" />
      </StatusIcon>
      <Battery>85%</Battery>
      <StatusIcon $width={50} viewBox="1196 0 50 96">
        <path fill="#b8baba" d="M1207 27H1217V21H1235V27H1245V36H1207z" />
        <path d="M1207 35H1245V79H1207z" />
      </StatusIcon>
      <Clock>02:19</Clock>
    </StatusGroup>
  );
}

function App() {
  return (
    <Page>
      <GlobalStyle />
      <StatusBar>
        <Notifications />
        <SystemStatus />
      </StatusBar>
      <Header>
        <BackButton aria-label="Back">
          <svg width="80" height="80" fill="none" stroke="#191c1f" strokeWidth="8" strokeLinecap="round" strokeLinejoin="round">
            <path d="M34 14 8 40 34 66M10 40H68" />
          </svg>
        </BackButton>
        <Title>La Casa Navarra</Title>
      </Header>
      <Actions>
        <Action>
          <Circle viewBox="0 0 160 160">
            <path d="M43 48H70Q73 49 71 52L62 62 84 83Q85 84 85 86V116A5 5 0 0 1 75 116V88L54 69 43 79Q40 81 40 78V51Q40 48 43 48z" />
            <path d="M117 48H90Q87 49 89 52L99 62 90 71A5 5 0 0 0 97 78L106 69 117 79Q120 81 120 78V51Q120 48 117 48z" />
          </Circle>
          Split bill
        </Action>
        <Action>
          <Circle viewBox="0 0 160 160">
            <path d="M48 46Q49 44 51 46L60 52 67 46Q70 44 73 46L80 52 87 46Q90 44 93 46L100 52 109 46Q111 44 112 46V113Q112 116 109 116H51Q48 116 48 113z" />
            <g fill="#0075eb">
              <rect x="60" y="64" width="40" height="8" rx="4" />
              <rect x="60" y="80" width="40" height="8" rx="4" />
              <rect x="60" y="96" width="40" height="8" rx="4" />
            </g>
          </Circle>
          Statement
        </Action>
        <Action>
          <Circle viewBox="0 0 160 160">
            <path d="M36 80C43 62 60 50 80 50S117 62 124 80C117 98 100 110 80 110S43 98 36 80z" />
            <circle cx="80" cy="80" r="16" fill="none" stroke="#0075eb" strokeWidth="8" />
            <path d="M46 38 122 114" fill="none" stroke="#0075eb" strokeWidth="8" />
            <path d="M46 48 112 115" fill="none" stroke="#fff" strokeWidth="7" strokeLinecap="round" />
          </Circle>
          Hide
        </Action>
      </Actions>
      <Gap />
      <Details>
        {rows.map(([label, value]) => (
          <Row key={label}>
            <Label>{label}</Label>
            <Value>{value}</Value>
          </Row>
        ))}
      </Details>
      <Gap />
      <RegionMap />
    </Page>
  );
}

export default App;
